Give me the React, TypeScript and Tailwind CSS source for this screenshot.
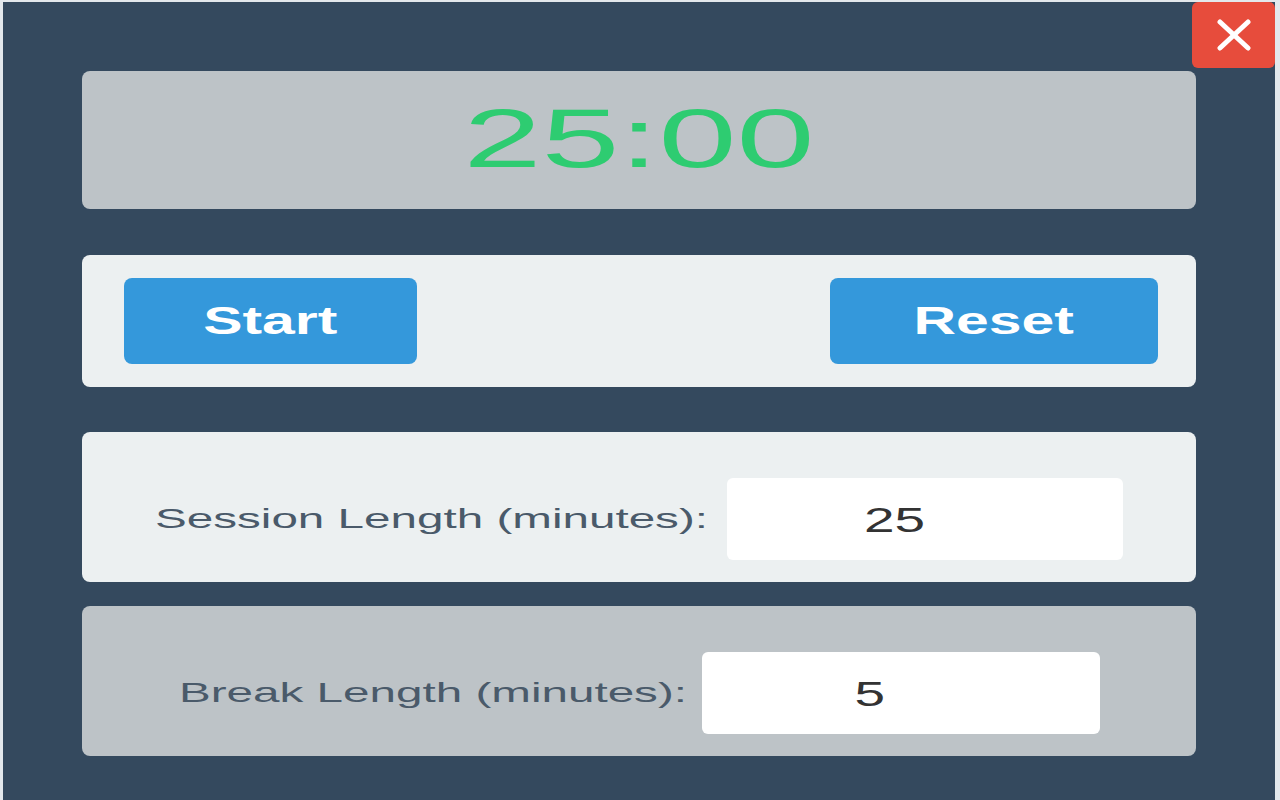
import React from "react";

const font = { fontFamily: '"Liberation Sans", Arial, sans-serif' };

function CloseButton() {
  return (
    <button className="absolute top-0 right-0 w-[83px] h-[66px] bg-[#e74c3c] rounded-md flex items-center justify-center">
      <svg width="36" height="32" viewBox="0 0 36 32">
        <line x1="4" y1="3" x2="32" y2="29" stroke="#fff" strokeWidth="5" strokeLinecap="round" />
        <line x1="32" y1="3" x2="4" y2="29" stroke="#fff" strokeWidth="5" strokeLinecap="round" />
      </svg>
    </button>
  );
}

function LengthRow({
  label,
  value,
  labelWidth,
  gap,
  inputWidth,
  tone,
}: {
  label: string;
  value: string;
  labelWidth: string;
  gap: string;
  inputWidth: string;
  tone: string;
}) {
  return (
    <div className={`h-[150px] rounded-lg ${tone} flex justify-center pt-[46px] pb-[22px]`}>
      <div className={`flex items-center ${gap}`}>
        <div className={labelWidth}>
          <span className="inline-block origin-left scale-x-[1.7] whitespace-nowrap text-[28px] leading-none text-[#4a5a6a] pt-[2px]">
            {label}
          </span>
        </div>
        <div className={`${inputWidth} h-[82px] bg-white rounded-md flex items-center justify-center pr-[62px]`}>
          <span className="inline-block scale-x-[1.57] text-[35px] leading-none text-[#333]">{value}</span>
        </div>
      </div>
    </div>
  );
}

export default function App() {
  return (
    <div className="w-full h-[800px] bg-[#e3e8ec] pl-[3px] pt-[2px] pr-[5px] overflow-hidden" style={font}>
      <div className="relative h-full bg-[#34495e] px-[79px] pt-[69px] flex flex-col">
        <CloseButton />

        <div className="h-[138px] rounded-lg bg-[#bdc3c7] flex items-center justify-center">
          <span className="inline-block scale-x-[1.67] text-[84px] leading-none text-[#2ecc71] pb-[4px]">25:00</span>
        </div>

        <div className="mt-[46px] h-[132px] rounded-lg bg-[#ecf0f1] flex items-center justify-between pl-[42px] pr-[38px]">
          <button className="w-[293px] h-[86px] rounded-lg bg-[#3498db] flex items-center justify-center">
            <span className="inline-block scale-x-[1.55] text-[38px] font-bold leading-none text-white">Start</span>
          </button>
          <button className="w-[328px] h-[86px] rounded-lg bg-[#3498db] flex items-center justify-center">
            <span className="inline-block scale-x-[1.55] text-[38px] font-bold leading-none text-white">Reset</span>
          </button>
        </div>

        <div className="mt-[45px]">
          <LengthRow
            label="Session Length (minutes):"
            value="25"
            labelWidth="w-[553px]"
            gap="gap-[19px]"
            inputWidth="w-[396px]"
            tone="bg-[#ecf0f1]"
          />
        </div>

        <div className="mt-[24px]">
          <LengthRow
            label="Break Length (minutes):"
            value="5"
            labelWidth="w-[507px]"
            gap="gap-[16px]"
            inputWidth="w-[398px]"
            tone="bg-[#bdc3c7]"
          />
        </div>
      </div>
    </div>
  );
}
